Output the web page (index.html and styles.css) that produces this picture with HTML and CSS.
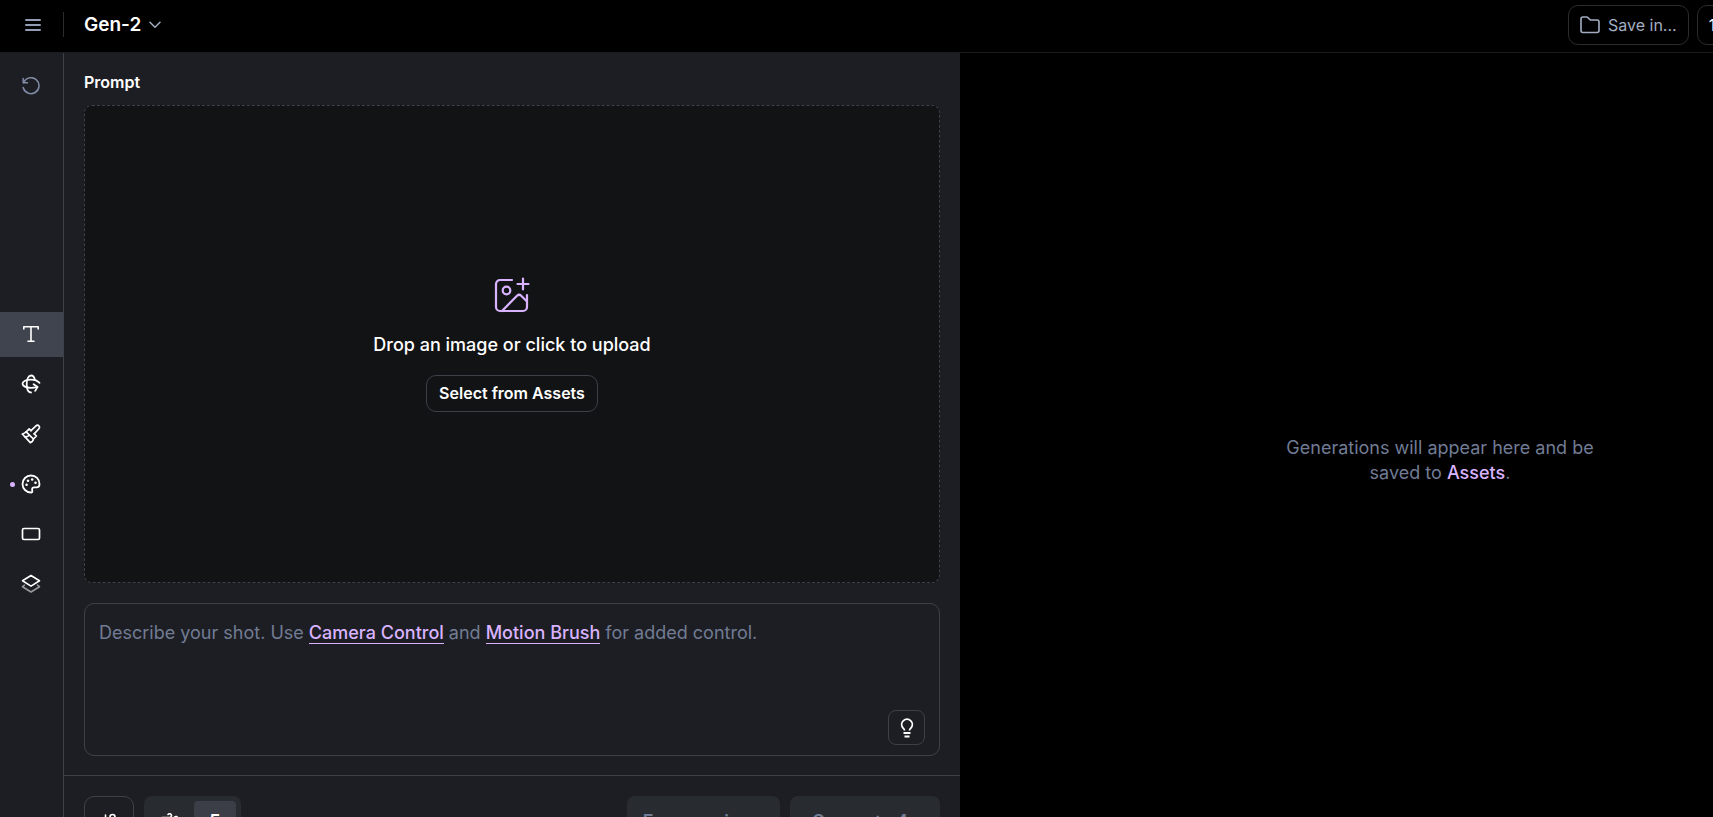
FILE: index.html
```html
<!DOCTYPE html>
<html lang="en">
<head>
  <meta charset="UTF-8">
  <meta name="viewport" content="width=device-width, initial-scale=1.0">
  <title>Gen-2</title>
  <link rel="stylesheet" href="styles.css">
</head>
<body>
  <div class="app">
    <!-- Top bar -->
    <header class="topbar">
      <button class="menu-btn" type="button" aria-label="Menu">
        <svg width="16" height="14" viewBox="0 0 16 14" fill="none" stroke="currentColor" stroke-width="2" stroke-linecap="round"><path d="M1 2h14M1 7h14M1 12h14"/></svg>
      </button>
      <button class="model-btn" type="button">
        <span>Gen-2</span>
        <svg width="12" height="8" viewBox="0 0 12 8" fill="none" stroke="#a3adc2" stroke-width="1.5" stroke-linecap="round" stroke-linejoin="round"><path d="M1 1.2l5 5 5-5"/></svg>
      </button>
      <div class="topbar-actions">
        <button class="outline-btn" type="button">
          <svg width="20" height="18" viewBox="0 0 20 18" fill="none" stroke="currentColor" stroke-width="1.6" stroke-linejoin="round"><path d="M1 3a2 2 0 0 1 2-2h3.600a2 2 0 0 1 1.500.7L9.500 3.300a2 2 0 0 0 1.500.7H17a2 2 0 0 1 2 2v8.500a2 2 0 0 1-2 2H3a2 2 0 0 1-2-2z"/></svg>
          Save in...
        </button>
        <button class="outline-btn credits" type="button">125 credits left</button>
      </div>
    </header>

    <div class="workspace">
      <!-- Tool rail -->
      <nav class="rail" aria-label="Tools">
        <button class="rail-btn reset" type="button" aria-label="Reset">
          <svg width="18" height="18" viewBox="0 0 18 18" fill="none" stroke="currentColor" stroke-width="1.5" stroke-linecap="round" stroke-linejoin="round"><path d="M1.200 1.500v4.300h4.300"/><path d="M1.600 5.600A8 8 0 1 1 1.200 10.500"/></svg>
        </button>
        <div class="tools">
          <button class="rail-btn active" type="button" aria-label="Text">
            <svg width="18" height="18" viewBox="0 0 18 18" fill="none" stroke="currentColor" stroke-width="1.6" stroke-linecap="round" stroke-linejoin="round"><path d="M1.800 4V1.800h14.400V4M9 1.800v14.400M6 16.200h6"/></svg>
          </button>
          <button class="rail-btn" type="button" aria-label="Camera Control">
            <svg width="20" height="20" viewBox="0 0 20 20" fill="none" stroke="currentColor" stroke-width="1.8" stroke-linecap="round" stroke-linejoin="round"><path d="M13.800 5.500C13.200 2.900 11.900 1.500 10.200 1.500c-2.700 0-4.500 3.600-4.500 8.500s1.700 8.500 4.300 8.500"/><path d="M18.500 8.800C16.500 6.700 13.500 5.600 10 5.600c-4.700 0-8.500 1.700-8.500 4.100 0 2.300 3.600 4.100 8.200 4.100 2.500 0 4.800-.3 6.600-.8"/><path d="M12.600 10.300l4 2.600-2.400 4"/></svg>
          </button>
          <button class="rail-btn" type="button" aria-label="Motion Brush">
            <svg width="20" height="20" viewBox="0 0 20 20" fill="none" stroke="currentColor" stroke-width="1.7" stroke-linecap="round" stroke-linejoin="round"><path d="M10 6.600l5-4.800a2 2 0 0 1 2.900 2.900l-4.700 5.200"/><path d="M10 6.600L8.200 4.800 5.200 7.800l7.200 7.200 3-3-2.200-2.100"/><path d="M5.200 7.800C4.200 9 2.900 9.700 1.300 10l8 8.600c1.900-.6 2.900-1.900 3.100-3.600"/><path d="M4 12.900c1.500 0 3-.4 4-1.400"/></svg>
          </button>
          <button class="rail-btn has-dot" type="button" aria-label="Style">
            <svg width="20" height="20" viewBox="0 0 20 20" fill="none" stroke="currentColor" stroke-width="1.8" stroke-linejoin="round"><path d="M10 1.500a8.500 8.500 0 1 0 0 17c1 0 1.400-.6 1.300-1.500l-.2-1.400c-.1-1.500.7-2.200 2.100-2.200h2.300c2 0 3-1.400 3-3.400 0-4.900-3.700-8.500-8.500-8.500z"/><g fill="currentColor" stroke="none"><circle cx="5.600" cy="10.700" r="1.300"/><circle cx="7" cy="6.700" r="1.300"/><circle cx="11.200" cy="5.500" r="1.300"/><circle cx="14.500" cy="8.700" r="1.300"/></g></svg>
          </button>
          <button class="rail-btn" type="button" aria-label="Aspect ratio">
            <svg width="20" height="14" viewBox="0 0 20 14" fill="none" stroke="currentColor" stroke-width="1.7"><rect x="1.500" y="1.500" width="17" height="11" rx="1.500"/></svg>
          </button>
          <button class="rail-btn" type="button" aria-label="Layers">
            <svg width="20" height="20" viewBox="0 0 20 20" fill="none" stroke="currentColor" stroke-width="1.6" stroke-linejoin="round" stroke-linecap="round"><path d="M10 1.500l8.500 5.300-8.500 5.300-8.500-5.300z"/><path d="M3.500 11.200l-2 1.500 8.500 5.300 8.500-5.300-2-1.500" opacity=".55"/></svg>
          </button>
        </div>
      </nav>

      <!-- Prompt panel -->
      <main class="panel">
        <div class="panel-body">
          <h1>Prompt</h1>
          <div class="dropzone">
            <svg width="36" height="36" viewBox="0 0 36 36" fill="none" stroke="#d9b3ff" stroke-width="2.2" stroke-linecap="round" stroke-linejoin="round"><path d="M18 3H6a4 4 0 0 0-4 4v23a4 4 0 0 0 4 4h23a4 4 0 0 0 4-4V18"/><path d="M29 1.500v11M23.500 7h11"/><circle cx="12.500" cy="13.500" r="3.800"/><path d="M8 34l15-15.200a3 3 0 0 1 4.200 0L33 24.500"/></svg>
            <p>Drop an image or click to upload</p>
            <button class="assets-btn" type="button">Select from Assets</button>
          </div>
          <div class="prompt-box">
            <textarea id="prompt" aria-label="Describe your shot"></textarea>
            <p class="hint">Describe your shot. Use <a href="#camera">Camera Control</a> and <a href="#brush">Motion Brush</a> for added control.</p>
            <button class="idea-btn" type="button" aria-label="Prompt ideas">
              <svg width="14" height="20" viewBox="0 0 14 20" fill="none" stroke="currentColor" stroke-width="1.8"><path d="M4.500 12.600c0-1.400-.8-2-1.800-3a5.300 5.300 0 1 1 8.600 0c-1 1-1.800 1.600-1.800 3"/><path d="M3.500 15h7M4.500 18.500h5"/></svg>
            </button>
          </div>
        </div>
        <footer class="actions">
          <button class="square-btn" type="button" aria-label="Settings">
            <svg width="16" height="16" viewBox="0 0 16 16" fill="none" stroke="currentColor" stroke-width="1.6" stroke-linecap="round"><path d="M4.500 2v6M11.500 8v6"/><circle cx="4.500" cy="11.500" r="2.500"/><circle cx="11.500" cy="4" r="2.500"/></svg>
          </button>
          <div class="segment">
            <button type="button" aria-label="Motion">
              <svg width="18" height="16" viewBox="0 0 18 16" fill="none" stroke="currentColor" stroke-width="1.6" stroke-linecap="round"><path d="M1 4.500h7.500a1.900 1.900 0 1 0-1.500-3M1 8h14a2.200 2.200 0 1 0-1.500-3.800M4 11.500h7a1.800 1.800 0 1 1-1.500 2.800"/></svg>
            </button>
            <button class="selected" type="button">5</button>
          </div>
          <button class="generate-btn push" type="button" disabled>Free previews</button>
          <button class="generate-btn" type="button" disabled>Generate 4s</button>
        </footer>
      </main>

      <!-- Output -->
      <section class="output">
        <p>Generations will appear here and be saved to <a href="#assets">Assets</a>.</p>
      </section>
    </div>
  </div>
</body>
</html>
```

FILE: styles.css
```css
* {
  box-sizing: border-box;
}

body {
  margin: 0;
  background: #000;
  color: #fff;
  font-family: Inter, "Liberation Sans", sans-serif;
  font-size: 18px;
  overflow: hidden;
}

h1,
p {
  margin: 0;
}

button {
  display: flex;
  align-items: center;
  justify-content: center;
  padding: 0;
  border: none;
  background: none;
  color: inherit;
  font: inherit;
  cursor: pointer;
}

a {
  color: #d9b3ff;
  font-weight: 500;
  text-decoration: none;
}

.app {
  display: flex;
  flex-direction: column;
  min-width: 1920px;
  min-height: max(100vh, 866px);
}

/* top bar */
.topbar {
  display: flex;
  align-items: center;
  height: 53px;
  padding-bottom: 3px;
  border-bottom: 1px solid #1b1b1d;
}

.menu-btn {
  width: 64px;
  height: 25px;
  padding-left: 2px;
  border-right: 1px solid #2b2c30;
  color: #939db3;
}

.model-btn {
  gap: 8px;
  margin-left: 20px;
  font-size: 19px;
  font-weight: 600;
}

.topbar-actions {
  display: flex;
  gap: 8px;
  width: 352px;
  margin-left: auto;
}

.outline-btn {
  gap: 8px;
  height: 40px;
  padding: 0 11px;
  border: 1px solid #2b2c30;
  border-radius: 10px;
  color: #a3adc2;
  font-size: 16px;
}

.credits {
  color: #fff;
}

/* tool rail */
.workspace {
  display: flex;
  flex: 1;
}

.rail {
  display: flex;
  flex-direction: column;
  justify-content: center;
  position: relative;
  width: 64px;
  border-right: 1px solid #3e4047;
  background: #1d1e23;
}

.tools {
  display: flex;
  flex-direction: column;
  gap: 5px;
}

.rail-btn {
  position: relative;
  width: 100%;
  height: 45px;
  padding: 0 2px 1px 0;
}

.rail-btn.active {
  background: #40444e;
}

.rail-btn.reset {
  position: absolute;
  top: 11px;
  color: #7f8aa3;
}

.has-dot::before {
  content: "";
  position: absolute;
  left: 10px;
  width: 5px;
  height: 5px;
  border-radius: 50%;
  background: #d9b3ff;
}

/* prompt panel */
.panel {
  display: flex;
  flex-direction: column;
  width: calc(50% - 64px);
  background: #1d1e23;
}

.panel-body {
  display: flex;
  flex: 1;
  flex-direction: column;
  padding: 19px 20px;
}

h1 {
  margin-bottom: 13px;
  font-size: 16px;
  font-weight: 600;
  line-height: 20px;
}

.dropzone {
  display: flex;
  flex: 1;
  flex-direction: column;
  align-items: center;
  justify-content: center;
  margin-bottom: 20px;
  border: 1px dashed #3e4047;
  border-radius: 8px;
  background: #121315;
  font-weight: 500;
}

.dropzone p {
  margin: 20px 0 18px;
  font-size: 18px;
  line-height: 24px;
}

.assets-btn {
  height: 37px;
  padding: 0 12px;
  border: 1px solid #3e4047;
  border-radius: 10px;
  font-size: 16px;
  font-weight: 600;
}

.prompt-box {
  position: relative;
  height: 153px;
}

.prompt-box textarea {
  width: 100%;
  height: 100%;
  padding: 16px 15px;
  border: 1px solid #3e4047;
  border-radius: 10px;
  background: none;
  color: #fff;
  font: inherit;
  resize: none;
}

.hint {
  position: absolute;
  top: 18px;
  left: 15px;
  color: #717c94;
  line-height: 24px;
}

.hint a {
  border-bottom: 1px solid #d9b3ff;
}

.idea-btn {
  position: absolute;
  right: 15px;
  bottom: 11px;
  width: 37px;
  height: 35px;
  border: 1px solid #3e4047;
  border-radius: 8px;
}

/* action bar */
.actions {
  display: flex;
  gap: 10px;
  padding: 20px;
  border-top: 1px solid #3e4047;
}

.square-btn {
  width: 50px;
  height: 50px;
  border: 1px solid #3e4047;
  border-radius: 10px;
}

.segment {
  display: flex;
  gap: 3px;
  padding: 5px;
  border-radius: 8px;
  background: #282b2f;
}

.segment button {
  width: 42px;
  border-radius: 4px;
  font-weight: 600;
}

.segment .selected {
  background: #3b3e46;
}

.generate-btn {
  width: 150px;
  height: 50px;
  border-radius: 8px;
  background: #282b2f;
  color: #717c94;
  font-size: 18px;
  font-weight: 600;
}

.push {
  width: 153px;
  margin-left: auto;
}

/* output */
.output {
  display: flex;
  flex: 1;
  align-items: center;
  justify-content: center;
  color: #717c94;
  text-align: center;
}

.output p {
  width: 320px;
  line-height: 25px;
}
```
